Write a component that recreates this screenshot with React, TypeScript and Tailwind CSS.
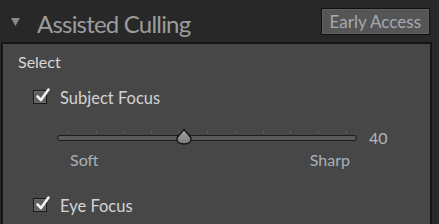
import React from "react";

const F = { fontFamily: "Lato, 'Open Sans', sans-serif" };

function Checkbox() {
  return (
    <div className="relative w-[14px] h-[14px] border border-[#1a1a1a] bg-[#5e5e5e] shadow-[inset_0_0_0_1px_#6a6a6a] mb-[3px]">
      <svg className="absolute left-[1px] top-[-4px]" width="16" height="16" viewBox="0 0 16 16">
        <path d="M2.5 9.5 L6 13 L13.5 2.5" fill="none" stroke="#f2f2f2" strokeWidth="2.6" strokeLinecap="round" strokeLinejoin="round" />
      </svg>
    </div>
  );
}

function Slider() {
  const ticks = Array.from({ length: 11 }, (_, i) => i);
  return (
    <div className="relative w-[300px] h-[20px]">
      {ticks.map((i) => (
        <div
          key={i}
          className="absolute top-[3px] w-px h-[3px] bg-[#5c5c5c]"
          style={{ left: 11 + i * 27.8 }}
        />
      ))}
      <div className="absolute left-0 right-0 top-[7px] h-[6px] rounded-[3px] border border-[#1c1c1c] bg-[#5a5a5a]" />
      <svg className="absolute left-[118px] top-[0px]" width="18" height="18" viewBox="0 0 18 18">
        <defs>
          <linearGradient id="g" x1="0" y1="0" x2="0" y2="1">
            <stop offset="0" stopColor="#a8a8a8" />
            <stop offset="1" stopColor="#7a7a7a" />
          </linearGradient>
        </defs>
        <path d="M9 1.5 C10.5 4.5 16 7.5 16 11 C16 14.5 13 16 9 16 C5 16 2 14.5 2 11 C2 7.5 7.5 4.5 9 1.5 Z" fill="url(#g)" stroke="#151515" strokeWidth="1.4" />
      </svg>
    </div>
  );
}

export default function App() {
  return (
    <div className="w-[439px] h-[224px] bg-[#282828] overflow-hidden flex flex-col" style={F}>
      <div className="h-[42px] flex items-start pt-[8px] pl-[11px] pr-[9px]">
        <svg width="9" height="8" viewBox="0 0 9 8" className="mr-[17px] mt-[10px]">
          <path d="M0 0 H9 L4.5 8 Z" fill="#8a8a8a" />
        </svg>
        <span className="text-[24px] tracking-[-0.8px] text-[#9c9c9c] leading-none mt-[4px]">Assisted Culling</span>
        <div className="ml-auto h-[27px] px-[8px] flex items-center border border-[#111] bg-[#555555] text-[17px] text-[#a3aab2] shadow-[inset_0_0_0_1px_#5f5f5f]">
          Early Access
        </div>
      </div>
      <div className="flex-1 ml-[1px] mr-[7px] border-l-2 border-t-2 border-r-2 border-[#151515] bg-[#474747] pl-[15px] pt-[8px]">
        <div className="text-[16px] leading-[20px] text-[#d8d8d8]">Select</div>
        <div className="flex items-center mt-[16px] pl-[15px]">
          <Checkbox />
          <span className="ml-[13px] text-[16.5px] leading-[20px] text-[#d4d4d4]">Subject Focus</span>
        </div>
        <div className="flex items-center mt-[20px] pl-[39px]">
          <Slider />
          <span className="ml-[12px] text-[16px] leading-[20px] text-[#b0b6bc]">40</span>
        </div>
        <div className="flex w-[280px] ml-[52px] mt-[2px] justify-between text-[16px] leading-[20px] text-[#a9b0b7]">
          <span>Soft</span>
          <span>Sharp</span>
        </div>
        <div className="flex items-center mt-[26px] pl-[15px]">
          <Checkbox />
          <span className="ml-[13px] text-[16.5px] leading-[20px] text-[#d4d4d4]">Eye Focus</span>
        </div>
      </div>
    </div>
  );
}
